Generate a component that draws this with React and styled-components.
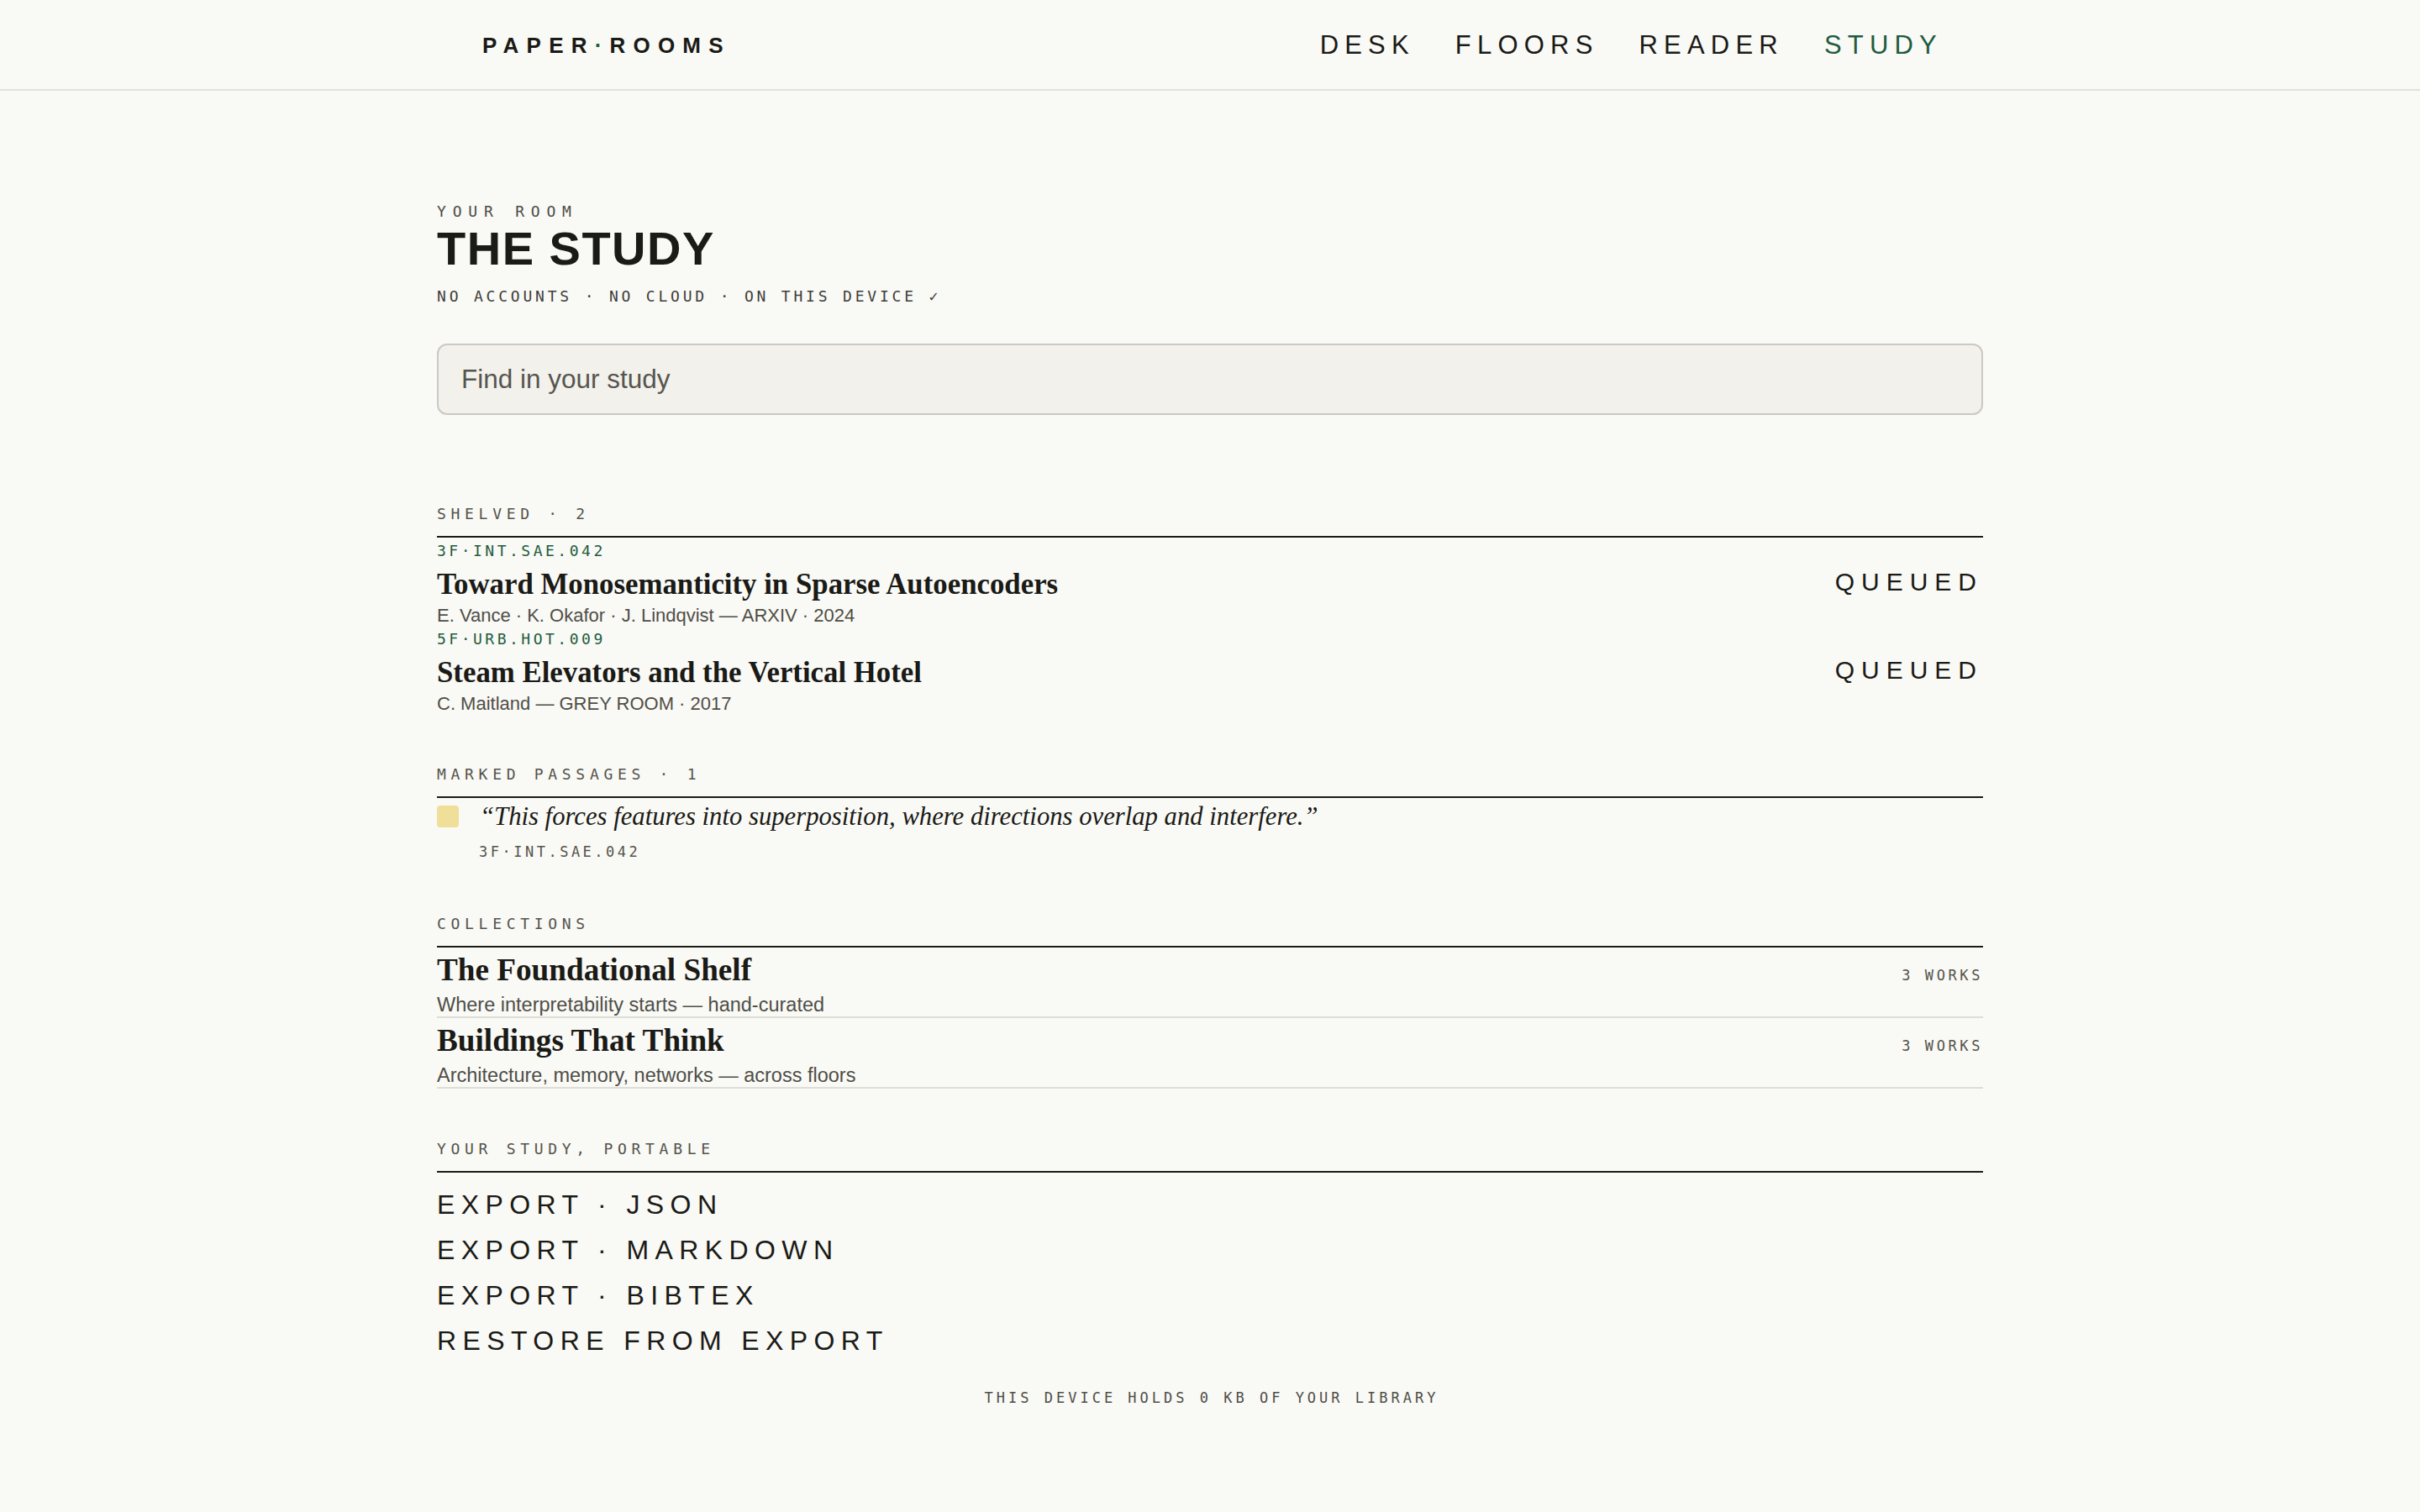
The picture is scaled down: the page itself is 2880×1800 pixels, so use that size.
import React from "react";
import styled, { createGlobalStyle } from "styled-components";

const SANS = `"Liberation Sans", Arial, sans-serif`;
const SERIF = `"Liberation Serif", "Times New Roman", serif`;
const MONO = `"DejaVu Sans Mono", "Liberation Mono", monospace`;

const GlobalStyle = createGlobalStyle`
  html, body { margin: 0; padding: 0; background: #f9f9f5; }
  body { font-family: ${SANS}; color: #1a1a16; }
  * { box-sizing: border-box; }
`;

const Page = styled.div`
  min-height: 1800px;
  background: #f9f9f5;
`;

const Header = styled.header`
  height: 108px;
  border-bottom: 2px solid #e2e2da;
`;

const HeaderInner = styled.div`
  max-width: 1840px;
  height: 106px;
  margin: 0 auto;
  padding: 0 48px 0 54px;
  display: flex;
  align-items: center;
  justify-content: space-between;
`;

const Logo = styled.div`
  font-family: ${SANS};
  font-weight: 700;
  font-size: 26px;
  line-height: 1;
  letter-spacing: 9.2px;
  color: #1a1a16;
  margin-top: 2px;
  span { color: #1f5c3f; }
`;

const Nav = styled.nav`
  display: flex;
  gap: 48px;
`;

const NavLink = styled.a`
  font-family: ${SANS};
  font-size: 31px;
  line-height: 1;
  letter-spacing: 7.2px;
  color: ${(p) => (p.$active ? "#1f5c3f" : "#1a1a16")};
  text-decoration: none;
  cursor: pointer;
`;

const Main = styled.main`
  max-width: 1840px;
  margin: 0 auto;
  padding: 132px 0 60px;
`;

const Eyebrow = styled.div`
  font-family: ${MONO};
  font-size: 18px;
  line-height: 24px;
  letter-spacing: 7.8px;
  color: #4d4c45;
`;

const PageTitle = styled.h1`
  margin: 2px 0 0;
  font-family: ${SANS};
  font-weight: 700;
  font-size: 56px;
  line-height: 60px;
  letter-spacing: 1.5px;
  color: #1a1a16;
`;

const Tagline = styled.div`
  margin-top: 15px;
  font-family: ${MONO};
  font-size: 18px;
  line-height: 24px;
  letter-spacing: 3.8px;
  color: #3f3e39;
`;

const Search = styled.input`
  display: block;
  width: 100%;
  height: 85px;
  margin-top: 44px;
  padding: 0 27px;
  border: 2px solid #cbc9c1;
  border-radius: 12px;
  background: #f2f1ec;
  font-family: ${SANS};
  font-size: 31.5px;
  color: #1a1a16;
  outline: none;
  &::placeholder { color: #57554e; }
`;

const Section = styled.section`
  margin-top: ${(p) => p.$gap}px;
`;

const SectionHead = styled.div`
  padding-bottom: 14px;
  border-bottom: 2px solid #1a1a16;
  font-family: ${MONO};
  font-size: 18px;
  line-height: 24px;
  letter-spacing: 5.7px;
  color: #55534b;
`;

const Item = styled.div`
  padding-top: 4px;
  height: 105px;
`;

const Code = styled.div`
  font-family: ${MONO};
  font-size: 18px;
  line-height: 24px;
  letter-spacing: 3.5px;
  color: ${(p) => (p.$muted ? "#55534b" : "#1f5c3f")};
`;

const TitleRow = styled.div`
  display: flex;
  align-items: baseline;
  justify-content: space-between;
  margin-top: ${(p) => p.$top || 0}px;
`;

const ItemTitle = styled.div`
  font-family: ${SERIF};
  font-weight: 700;
  font-size: 34.8px;
  line-height: 40px;
  color: #1a1a16;
`;

const Status = styled.div`
  align-self: center;
  margin-bottom: 6px;
  font-family: ${SANS};
  font-size: 30px;
  line-height: 34px;
  letter-spacing: 8px;
  color: #1a1a16;
`;

const Meta = styled.div`
  margin-top: ${(p) => p.$top || 4}px;
  font-family: ${SANS};
  font-size: ${(p) => p.$size || 22}px;
  line-height: ${(p) => p.$lh || 25}px;
  color: #4f4e47;
`;

const Passage = styled.div`
  padding-top: 2px;
  display: flex;
  align-items: flex-start;
  gap: 25px;
`;

const Swatch = styled.div`
  flex: none;
  width: 26px;
  height: 26px;
  margin-top: 7px;
  border-radius: 4px;
  background: #efdf98;
`;

const Quote = styled.div`
  font-family: ${SERIF};
  font-style: italic;
  font-size: 30.7px;
  line-height: 40px;
  color: #1a1a16;
`;

const PassageSource = styled(Code)`
  margin: 11px 0 0 50px;
  font-size: 17px;
  line-height: 22px;
  letter-spacing: 3.5px;
`;

const Collection = styled.div`
  padding-top: 5px;
  border-bottom: 2px solid #deded6;
`;

const CollectionTitle = styled.div`
  font-family: ${SERIF};
  font-weight: 700;
  font-size: 37.2px;
  line-height: 44px;
  color: #1a1a16;
`;

const Count = styled.div`
  font-family: ${MONO};
  font-size: 17px;
  letter-spacing: 3.6px;
  color: #55534b;
`;

const ExportList = styled.div`
  padding-top: 11px;
  display: flex;
  flex-direction: column;
  align-items: flex-start;
`;

const ExportButton = styled.button`
  padding: 0;
  border: 0;
  background: none;
  cursor: pointer;
  font-family: ${SANS};
  font-size: 32px;
  line-height: 54px;
  letter-spacing: 7.4px;
  color: #1a1a16;
  text-align: left;
`;

const Footer = styled.div`
  margin-top: 29px;
  padding-left: 4px;
  text-align: center;
  font-family: ${MONO};
  font-size: 17px;
  line-height: 24px;
  letter-spacing: 4px;
  color: #4f4e47;
`;

const shelved = [
  {
    code: "3F·INT.SAE.042",
    title: "Toward Monosemanticity in Sparse Autoencoders",
    meta: "E. Vance · K. Okafor · J. Lindqvist — ARXIV · 2024",
  },
  {
    code: "5F·URB.HOT.009",
    title: "Steam Elevators and the Vertical Hotel",
    meta: "C. Maitland — GREY ROOM · 2017",
  },
];

const collections = [
  { title: "The Foundational Shelf", desc: "Where interpretability starts — hand-curated", count: "3 WORKS" },
  { title: "Buildings That Think", desc: "Architecture, memory, networks — across floors", count: "3 WORKS" },
];

const exportsList = ["EXPORT · JSON", "EXPORT · MARKDOWN", "EXPORT · BIBTEX", "RESTORE FROM EXPORT"];

export default function App() {
  return (
    <Page>
      <GlobalStyle />
      <Header>
        <HeaderInner>
          <Logo>
            PAPER<span>·</span>ROOMS
          </Logo>
          <Nav>
            <NavLink>DESK</NavLink>
            <NavLink>FLOORS</NavLink>
            <NavLink>READER</NavLink>
            <NavLink $active>STUDY</NavLink>
          </Nav>
        </HeaderInner>
      </Header>
      <Main>
        <Eyebrow>YOUR ROOM</Eyebrow>
        <PageTitle>THE STUDY</PageTitle>
        <Tagline>NO ACCOUNTS · NO CLOUD · ON THIS DEVICE ✓</Tagline>
        <Search placeholder="Find in your study" />

        <Section $gap={106}>
          <SectionHead>SHELVED · 2</SectionHead>
          {shelved.map((s) => (
            <Item key={s.code}>
              <Code>{s.code}</Code>
              <TitleRow $top={8}>
                <ItemTitle>{s.title}</ItemTitle>
                <Status>QUEUED</Status>
              </TitleRow>
              <Meta>{s.meta}</Meta>
            </Item>
          ))}
        </Section>

        <Section $gap={60}>
          <SectionHead>MARKED PASSAGES · 1</SectionHead>
          <Passage>
            <Swatch />
            <Quote>“This forces features into superposition, where directions overlap and interfere.”</Quote>
          </Passage>
          <PassageSource $muted>3F·INT.SAE.042</PassageSource>
        </Section>

        <Section $gap={63}>
          <SectionHead>COLLECTIONS</SectionHead>
          {collections.map((c) => (
            <Collection key={c.title}>
              <TitleRow>
                <CollectionTitle>{c.title}</CollectionTitle>
                <Count>{c.count}</Count>
              </TitleRow>
              <Meta $top={5} $size={23.5} $lh={28}>
                {c.desc}
              </Meta>
            </Collection>
          ))}
        </Section>

        <Section $gap={60}>
          <SectionHead>YOUR STUDY, PORTABLE</SectionHead>
          <ExportList>
            {exportsList.map((e) => (
              <ExportButton key={e}>{e}</ExportButton>
            ))}
          </ExportList>
        </Section>

        <Footer>THIS DEVICE HOLDS 0 KB OF YOUR LIBRARY</Footer>
      </Main>
    </Page>
  );
}
